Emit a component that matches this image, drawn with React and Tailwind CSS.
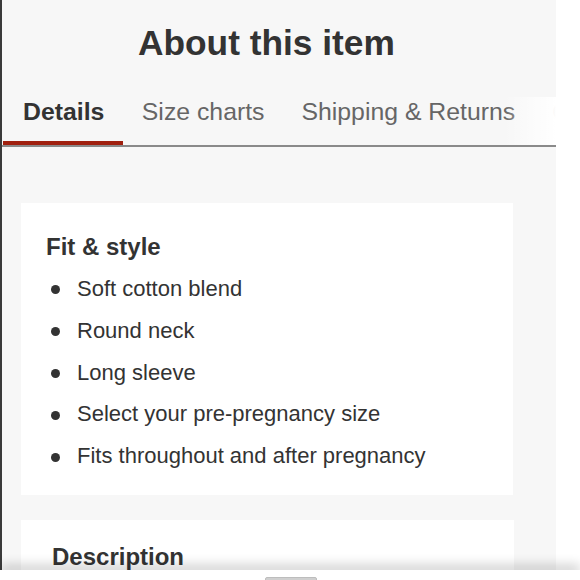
import React from 'react'

const tabs = [
  { label: 'Details', active: true },
  { label: 'Size charts' },
  { label: 'Shipping & Returns' },
  { label: 'Q&A' },
]

const fitItems = [
  'Soft cotton blend',
  'Round neck',
  'Long sleeve',
  'Select your pre-pregnancy size',
  'Fits throughout and after pregnancy',
]

export default function App() {
  return (
    <div
      className="relative w-[580px] h-[580px] overflow-hidden bg-white flex text-[#333]"
      style={{ fontFamily: '"Liberation Sans", Arial, sans-serif' }}
    >
      {/* left edge */}
      <div className="w-[2px] shrink-0 bg-[#3a3a3a]" />

      <div className="relative w-[554px] shrink-0 bg-[#f7f7f7] overflow-hidden">
        <h1 className="pt-[23px] pl-[136px] text-[35.3px] leading-[40px] font-bold whitespace-nowrap">
          About this item
        </h1>

        {/* tabs */}
        <div className="relative mt-[34px] flex items-end border-b-2 border-[#8a8a8a] whitespace-nowrap overflow-hidden">
          {tabs.map((t, i) => (
            <div key={t.label} className={i === 0 ? 'ml-[1px] shrink-0' : 'shrink-0'}>
              <div
                className={
                  t.active
                    ? 'pl-[20px] pr-[19px] pb-[14px] text-[24.8px] leading-[30px] font-bold text-[#333]'
                    : 'px-[18.5px] pb-[14px] text-[24.8px] leading-[30px] text-[#666]'
                }
              >
                {t.label}
              </div>
              <div className={t.active ? 'h-[5px] mb-[-1px] bg-[#a0200f]' : 'h-[5px] mb-[-1px]'} />
            </div>
          ))}
          <div className="absolute right-0 top-0 bottom-0 w-[52px] bg-gradient-to-r from-[#f7f7f7]/0 to-white" />
        </div>

        {/* fit & style card */}
        <div className="mt-[56px] ml-[19px] w-[492px] h-[292px] bg-white pt-[30px] pl-[25px]">
          <h2 className="text-[24px] leading-[28px] font-bold">Fit &amp; style</h2>
          <ul className="mt-[7px]">
            {fitItems.map(item => (
              <li key={item} className="flex items-center h-[41.8px] text-[22px] leading-[41.8px]">
                <span className="ml-[5px] mt-[2px] w-[9px] h-[9px] rounded-full bg-[#333] shrink-0" />
                <span className="ml-[17px] whitespace-nowrap">{item}</span>
              </li>
            ))}
          </ul>
        </div>

        {/* description card */}
        <div className="mt-[25px] ml-[19px] w-[493px] h-[120px] bg-white pt-[23px] pl-[31px]">
          <h2 className="text-[24px] leading-[28px] font-bold">Description</h2>
        </div>
      </div>

      {/* bottom bar */}
      <div className="absolute left-0 right-0 bottom-0 h-[10px] bg-white shadow-[0_-5px_12px_rgba(0,0,0,0.2)]">
        <div className="absolute left-[265px] top-[7px] w-[52px] h-[4px] rounded-t-[2px] bg-[#cfcfcf] border border-[#bdbdbd]" />
      </div>
    </div>
  )
}
